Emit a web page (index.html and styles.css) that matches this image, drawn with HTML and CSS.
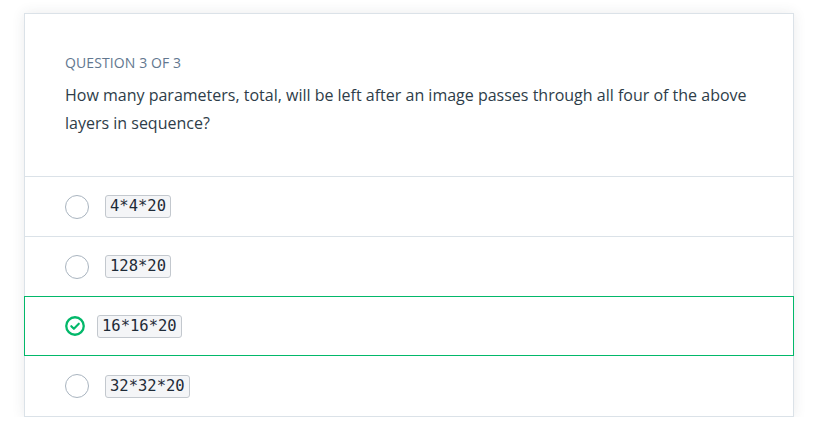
FILE: index.html
```html
<!DOCTYPE html>
<html>
<head>
<meta charset="utf-8">
<link rel="stylesheet" href="styles.css">
</head>
<body>
<div class="card">
  <div class="question">
    <div class="label">QUESTION 3 OF 3</div>
    <p class="prompt">How many parameters, total, will be left after an image passes through all four of the above layers in sequence?</p>
  </div>
  <ul class="options">
    <li class="option"><span class="radio"></span><code class="chip">4*4*20</code></li>
    <li class="option"><span class="radio"></span><code class="chip">128*20</code></li>
    <li class="option selected"><svg class="check" viewBox="0 0 20 20" width="20" height="20"><circle cx="10" cy="10" r="8.75" fill="none" stroke="#02b86a" stroke-width="2.3"/><path d="M6.3 10.2l2.6 2.6 4.9-5.1" fill="none" stroke="#02b86a" stroke-width="2.1" stroke-linecap="round" stroke-linejoin="round"/></svg><code class="chip">16*16*20</code></li>
    <li class="option"><span class="radio"></span><code class="chip">32*32*20</code></li>
  </ul>
</div>
</body>
</html>
```
FILE: styles.css
```css
html, body {
  margin: 0;
  padding: 0;
  background: #ffffff;
}
body {
  padding: 13px 0 0 24px;
  font-family: "Open Sans", "Noto Sans", sans-serif;
}
.card {
  width: 770px;
  box-sizing: border-box;
  border: 1px solid #dbe2e8;
  background: #fff;
  box-shadow: 0 0 12px rgba(46, 61, 73, 0.1);
}
.question {
  padding: 39px 40px 39px 40px;
}
.label {
  font-size: 14px;
  line-height: 20px;
  color: #62778f;
  letter-spacing: 0.1px;
}
.prompt {
  margin: 8px 0 0 0;
  font-size: 16px;
  line-height: 28px;
  color: #2e3d49;
}
.options {
  list-style: none;
  margin: 0;
  padding: 0;
}
.option {
  display: flex;
  align-items: center;
  gap: 16px;
  height: 60px;
  box-sizing: border-box;
  border-top: 1px solid #dbe2e8;
  padding: 0 40px;
}
.option.selected {
  border: 1px solid #02b86a;
  margin: 0 -1px;
  padding: 0 40px;
  gap: 12px;
}
.option.selected + .option {
  border-top: none;
}
.radio {
  width: 24px;
  height: 24px;
  box-sizing: border-box;
  border: 1px solid #a9b4bf;
  border-radius: 50%;
  flex: none;
}
.check {
  flex: none;
  display: block;
}
.chip {
  font-family: "DejaVu Sans Mono", monospace;
  font-size: 15.5px;
  line-height: 21px;
  color: #1e2b38;
  background: #f4f5f7;
  border: 1px solid #c3c8ce;
  border-radius: 3px;
  padding: 0 4px;
}
```
